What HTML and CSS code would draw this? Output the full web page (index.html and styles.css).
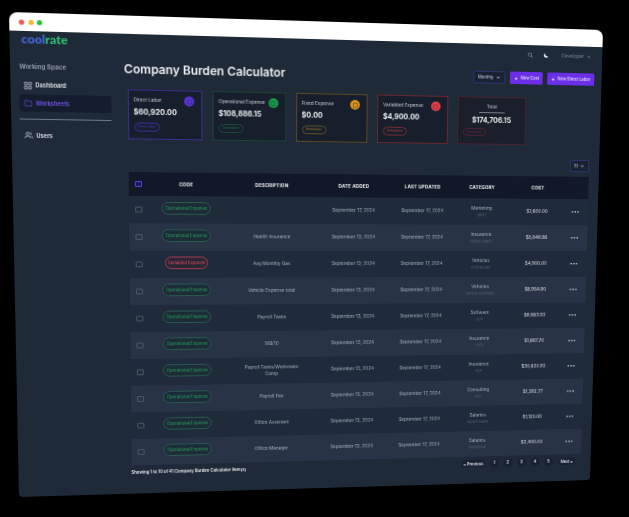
FILE: index.html
```html
<!DOCTYPE html>
<html lang="en">
<head>
  <meta charset="UTF-8">
  <meta name="viewport" content="width=device-width, initial-scale=1.0">
  <title>Company Burden Calculator</title>
  <link rel="stylesheet" href="styles.css">
</head>
<body>
  <div class="window">
   <div class="window-inner">
    <div class="titlebar">
      <span class="dot dot-red"></span><span class="dot dot-yellow"></span><span class="dot dot-green"></span>
    </div>
    <div class="shell">
      <aside class="sidebar">
        <div class="logo"><span class="logo-cool">cool</span><span class="logo-rate">rate</span></div>
        <p class="side-title">Working Space</p>
        <a class="side-link">
          <svg viewBox="0 0 16 16"><rect x="2" y="2" width="5" height="5" rx="1.5"/><rect x="9" y="2" width="5" height="5" rx="1.5"/><rect x="2" y="9" width="5" height="5" rx="1.5"/><rect x="9" y="9" width="5" height="5" rx="1.5"/></svg>
          Dashboard
        </a>
        <a class="side-link side-active">
          <svg viewBox="0 0 16 16"><path d="M2 4.5a1 1 0 0 1 1-1h3.2l1.5 1.6H13a1 1 0 0 1 1 1v5.9a1 1 0 0 1-1 1H3a1 1 0 0 1-1-1z"/></svg>
          Worksheets
        </a>
        <hr class="side-rule">
        <a class="side-link">
          <svg viewBox="0 0 16 16"><circle cx="6" cy="5" r="2.6"/><path d="M1.5 13.5c0-2.6 2-4.3 4.5-4.3s4.5 1.7 4.5 4.3"/><path d="M10.5 2.6a2.6 2.6 0 0 1 0 4.8M12 9.6c1.6.6 2.6 2 2.6 3.9"/></svg>
          Users
        </a>
      </aside>
      <main class="main">
        <div class="topnav">
          <svg class="nav-icon" viewBox="0 0 16 16"><circle cx="7" cy="7" r="4.5"/><path d="M10.5 10.5 14 14"/></svg>
          <svg class="nav-icon nav-moon" viewBox="0 0 16 16"><path d="M13.5 10.2A6 6 0 0 1 5.8 2.5a6 6 0 1 0 7.7 7.7z"/></svg>
          <span class="nav-user">Developer</span>
          <svg class="chev" viewBox="0 0 10 10"><path d="M2 3.5 5 6.5 8 3.5"/></svg>
        </div>
        <div class="head">
          <h1>Company Burden Calculator</h1>
          <div class="head-actions">
            <button class="btn btn-select">Monthly <svg class="chev" viewBox="0 0 10 10"><path d="M2 3.5 5 6.5 8 3.5"/></svg></button>
            <button class="btn btn-primary"><b>+</b> New Cost</button>
            <button class="btn btn-primary"><b>+</b> New Direct Labor</button>
          </div>
        </div>
        <div class="cards">
          <div class="card card-purple">
            <p class="card-label">Direct Labor</p>
            <p class="card-value">$60,920.00</p>
            <span class="pill">Direct Labor</span>
            <span class="card-icon"></span>
          </div>
          <div class="card card-green">
            <p class="card-label">Operational Expense</p>
            <p class="card-value">$108,886.15</p>
            <span class="pill">Breakdown</span>
            <span class="card-icon"></span>
          </div>
          <div class="card card-amber">
            <p class="card-label">Fixed Expense</p>
            <p class="card-value">$0.00</p>
            <span class="pill">Breakdown</span>
            <span class="card-icon"></span>
          </div>
          <div class="card card-red">
            <p class="card-label">Variabled Expense</p>
            <p class="card-value">$4,900.00</p>
            <span class="pill">Breakdown</span>
            <span class="card-icon"></span>
          </div>
          <div class="card card-total">
            <p class="card-label">Total</p>
            <p class="card-value">$174,706.15</p>
            <span class="pill">Breakdown</span>
          </div>
        </div>
        <div class="size-row">
          <button class="btn btn-size">10 <svg class="chev" viewBox="0 0 10 10"><path d="M2 3.5 5 6.5 8 3.5"/></svg></button>
        </div>
        <table class="grid">
          <colgroup>
            <col class="c-check"><col class="c-code"><col class="c-desc"><col class="c-date"><col class="c-date2"><col class="c-cat"><col class="c-cost"><col class="c-more">
          </colgroup>
          <thead>
            <tr>
              <th><span class="check check-on"></span></th>
              <th>Code</th><th>Description</th><th>Date Added</th><th>Last Updated</th><th>Category</th><th>Cost</th><th></th>
            </tr>
          </thead>
          <tbody>
            <tr>
              <td><span class="check"></span></td><td><span class="badge">Operational Expense</span></td><td></td>
              <td>September 17, 2024</td><td>September 17, 2024</td>
              <td>Marketing<small>Sport</small></td><td class="cost">$1,600.00</td><td class="more">•••</td>
            </tr>
            <tr>
              <td><span class="check"></span></td><td><span class="badge">Operational Expense</span></td><td>Health Insurance</td>
              <td>September 13, 2024</td><td>September 17, 2024</td>
              <td>Insurance<small>United Health</small></td><td class="cost">$5,848.86</td><td class="more">•••</td>
            </tr>
            <tr>
              <td><span class="check"></span></td><td><span class="badge badge-red">Variabled Expense</span></td><td>Avg Monthly Gas</td>
              <td>September 13, 2024</td><td>September 17, 2024</td>
              <td>Vehicles<small>Vehicle Gas</small></td><td class="cost">$4,900.00</td><td class="more">•••</td>
            </tr>
            <tr>
              <td><span class="check"></span></td><td><span class="badge">Operational Expense</span></td><td>Vehicle Expense total</td>
              <td>September 13, 2024</td><td>September 17, 2024</td>
              <td>Vehicles<small>Vehicle Expenses</small></td><td class="cost">$6,954.80</td><td class="more">•••</td>
            </tr>
            <tr>
              <td><span class="check"></span></td><td><span class="badge">Operational Expense</span></td><td>Payroll Taxes</td>
              <td>September 13, 2024</td><td>September 17, 2024</td>
              <td>Software<small>ADP</small></td><td class="cost">$8,863.93</td><td class="more">•••</td>
            </tr>
            <tr>
              <td><span class="check"></span></td><td><span class="badge">Operational Expense</span></td><td>168/10</td>
              <td>September 13, 2024</td><td>September 17, 2024</td>
              <td>Insurance<small>Tivity</small></td><td class="cost">$1,687.70</td><td class="more">•••</td>
            </tr>
            <tr>
              <td><span class="check"></span></td><td><span class="badge">Operational Expense</span></td><td class="desc-wrap">Payroll Taxes/Workmans Comp</td>
              <td>September 13, 2024</td><td>September 17, 2024</td>
              <td>Insurance<small>ADP</small></td><td class="cost">$30,620.92</td><td class="more">•••</td>
            </tr>
            <tr>
              <td><span class="check"></span></td><td><span class="badge">Operational Expense</span></td><td>Payroll Fee</td>
              <td>September 13, 2024</td><td>September 17, 2024</td>
              <td>Consulting<small>ADP</small></td><td class="cost">$1,392.77</td><td class="more">•••</td>
            </tr>
            <tr>
              <td><span class="check"></span></td><td><span class="badge">Operational Expense</span></td><td>Office Assistant</td>
              <td>September 13, 2024</td><td>September 17, 2024</td>
              <td>Salaries<small>Vacant Name</small></td><td class="cost">$1,120.00</td><td class="more">•••</td>
            </tr>
            <tr>
              <td><span class="check"></span></td><td><span class="badge">Operational Expense</span></td><td>Office Manager</td>
              <td>September 13, 2024</td><td>September 17, 2024</td>
              <td>Salaries<small>Dominique</small></td><td class="cost">$2,400.00</td><td class="more">•••</td>
            </tr>
          </tbody>
        </table>
        <div class="foot">
          <p class="foot-note">Showing 1 to 10 of 41 Company Burden Calculator Item(s)</p>
          <div class="pager">
            <span class="page-text">« Previous</span>
            <span class="page-num">1</span><span class="page-num">2</span><span class="page-num">3</span><span class="page-num">4</span><span class="page-num">5</span>
            <span class="page-text page-next">Next »</span>
          </div>
        </div>
      </main>
    </div>
   </div>
  </div>
</body>
</html>
```

FILE: styles.css
```css
* {
  margin: 0;
  padding: 0;
  box-sizing: border-box;
}
html, body {
  width: 629px;
  height: 517px;
  overflow: hidden;
  background-color: #000;
}
body {
  font-family: "Inter", "Liberation Sans", sans-serif;
  color: #aab2bf;
}

/* the browser window, tilted onto the picture */
.window {
  width: 600px;
  height: 490px;
  background-color: #1f2a38;
  border-radius: 8px 8px 4px 4px;
  overflow: hidden;
  transform-origin: 0 0;
  transform: matrix3d(1.069766,0.033966,0,0.00013228, 0.022040,1.032490,0,0.0000859, 0,0,1,0, 9,12,0,1);
  filter: blur(0.3px);
}
.window-inner {
  zoom: 0.5;
  width: 1200px;
  height: 980px;
}
.titlebar {
  height: 36px;
  background-color: #fff;
  display: flex;
  align-items: center;
  gap: 7px;
  padding-left: 18px;
}
.dot {
  width: 10px;
  height: 10px;
  border-radius: 50%;
}
.dot-red { background-color: #f0544c; }
.dot-yellow { background-color: #f5b62e; }
.dot-green { background-color: #27c13f; }

.shell {
  display: flex;
  height: 944px;
}
.sidebar {
  width: 197px;
  flex: none;
  padding: 0 6px 0 16px;
  display: flex;
  flex-direction: column;
}
.logo {
  font-family: "Lato", "Liberation Sans", sans-serif;
  font-size: 24px;
  font-weight: 900;
  line-height: 32px;
  padding-left: 6px;
}
.logo-cool { color: #4468de; }
.logo-rate { color: #2cc070; }
.side-title {
  margin-top: 27px;
  font-size: 12px;
  font-weight: 700;
  line-height: 18px;
  color: #8d97a6;
  padding-left: 1px;
}
.side-link {
  display: flex;
  align-items: center;
  gap: 5px;
  height: 34px;
  padding-left: 8px;
  font-size: 11px;
  font-weight: 700;
  color: #d5dae2;
}
.side-link svg {
  width: 18px;
  height: 18px;
  fill: none;
  stroke: #b4bcc8;
  stroke-width: 1.3;
}
.sidebar .side-title + .side-link {
  margin-top: 12px;
}
.side-active {
  background-color: #141d2d;
  border-radius: 6px;
  color: #6d4fe0;
  margin-top: 1px;
}
.side-active svg {
  stroke: #5c4bc4;
}
.side-rule {
  border: 0;
  height: 2px;
  background-color: #6f7886;
  margin-top: 13px;
  margin-bottom: 15px;
}

.main {
  flex: 1;
  padding: 0 23px 0 26px;
  min-width: 0;
}
.topnav {
  height: 40px;
  display: flex;
  align-items: center;
  justify-content: flex-end;
  gap: 5px;
  padding-right: 2px;
  font-size: 10px;
  color: #77818f;
}
.nav-icon {
  width: 13px;
  height: 13px;
  fill: none;
  stroke: #98a1ae;
  stroke-width: 1.4;
  margin-right: 15px;
}
.nav-moon {
  fill: #dfe3ea;
  stroke: none;
  margin-right: 22px;
}
.chev {
  width: 10px;
  height: 10px;
  fill: none;
  stroke: currentColor;
  stroke-width: 1.4;
}
.head {
  height: 58px;
  display: flex;
  align-items: center;
  justify-content: space-between;
  margin-right: -6px;
}
.head h1 {
  font-size: 23.5px;
  font-weight: 600;
  color: #eef0f4;
  margin-left: -6px;
  margin-top: 2px;
}
.head-actions {
  display: flex;
  gap: 10px;
}
.btn {
  height: 26px;
  border: 0;
  border-radius: 3px;
  font-family: inherit;
  font-size: 8.5px;
  font-weight: 500;
  display: flex;
  align-items: center;
  justify-content: center;
  gap: 6px;
  padding: 0 8px;
  white-space: nowrap;
}
.btn-primary {
  background-color: #6a2fe6;
  color: #e8e4f8;
}
.btn-primary b {
  font-size: 12px;
}
.btn-select, .btn-size {
  background-color: #182233;
  border: 1px solid #2c3670;
  color: #b6bdc9;
}
.cards {
  margin-top: 11px;
  display: flex;
  gap: 20px;
}
.card {
  position: relative;
  width: 147px;
  height: 100px;
  padding: 13px 10px;
  background-color: #171f2c;
  border: 1px solid #333;
}
.card-label {
  font-size: 9.5px;
  line-height: 14px;
  color: #c8ccd4;
}
.card-value {
  margin-top: 7px;
  font-size: 14.5px;
  font-weight: 700;
  line-height: 20px;
  color: #eceef2;
}
.pill {
  display: inline-block;
  margin-top: 11px;
  width: 50px;
  height: 17px;
  border: 1px solid;
  border-radius: 9px;
  font-size: 6px;
  line-height: 15px;
  text-align: center;
  white-space: nowrap;
  overflow: hidden;
}
.card-icon {
  position: absolute;
  top: 11px;
  right: 14px;
  width: 20px;
  height: 20px;
  border-radius: 50%;
}
.card-icon::after {
  content: "";
  position: absolute;
  inset: 5px;
  border: 1px solid rgba(0, 0, 0, 0.28);
  border-radius: 1px;
}
.card-purple { border-color: #3a2f8c; }
.card-purple .pill { border-color: #3c30a0; color: #4a3ed0; }
.card-purple .card-icon { background-color: #5a35d8; }
.card-green { border-color: #1c4438; }
.card-green .pill { border-color: #1d4a3c; color: #1f7a4c; }
.card-green .card-icon { background-color: #1c9a4c; }
.card-amber { border-color: #5a4a22; }
.card-amber .pill { border-color: #5e5228; color: #a07a20; }
.card-amber .card-icon { background-color: #d8921a; }
.card-red { border-color: #6e2630; }
.card-red .pill { border-color: #7c2a34; color: #c8404a; }
.card-red .card-icon { background-color: #e5404a; }
.card-total {
  background-color: #1a1f2b;
  border-color: #4a2230;
}
.card-total .card-label {
  text-align: center;
  padding-bottom: 4px;
  margin: 0 34px;
  border-bottom: 1px solid #7a818c;
}
.card-total .card-value {
  margin-top: 5px;
  text-align: center;
}
.card-total .pill {
  margin-top: 6px;
  border-color: #4e2530;
  color: #6e2a34;
}

.size-row {
  margin-top: 30px;
  display: flex;
  justify-content: flex-end;
}
.btn-size {
  width: 42px;
  padding: 0;
  font-size: 9px;
  gap: 3px;
  border-radius: 2px;
}
.grid {
  margin-top: 11px;
  width: 954px;
  table-layout: fixed;
  border-collapse: collapse;
  font-size: 9.5px;
}
.c-check { width: 39px; }
.c-code { width: 150px; }
.c-desc { width: 194px; }
.c-date { width: 142px; }
.c-date2 { width: 146px; }
.c-cat { width: 106px; }
.c-cost { width: 134px; }
.c-more { width: 43px; }
.grid th {
  height: 48px;
  background-color: #111827;
  color: #f0f2f5;
  font-size: 9.5px;
  font-weight: 700;
  letter-spacing: 0.3px;
  text-transform: uppercase;
}
.grid td {
  height: 56px;
  text-align: center;
  line-height: 15px;
  color: #a7afbb;
  background-color: #1f2b3a;
}
.grid td.desc-wrap {
  padding: 0 30px;
}
.grid tbody tr:nth-child(even) td {
  background-color: #283446;
}
.grid small {
  display: block;
  font-size: 7.5px;
  line-height: 12px;
  color: #566172;
}
.grid .cost {
  font-weight: 500;
  color: #c3c9d2;
}
.grid .more {
  font-size: 10px;
  letter-spacing: 0.5px;
  color: #eef0f3;
  padding-right: 10px;
}
.check {
  display: inline-block;
  width: 13px;
  height: 13px;
  border: 1px solid #4e5866;
  border-radius: 2px;
  vertical-align: middle;
}
.check-on {
  border: 3px solid #5a3ff0;
  background-color: #1a1f44;
}
.badge {
  display: inline-block;
  width: 97px;
  height: 26px;
  line-height: 24px;
  border: 1px solid #2a5a50;
  border-radius: 13px;
  font-size: 8.5px;
  color: #25a05c;
  background-color: #1d2d38;
  white-space: nowrap;
  overflow: hidden;
}
.badge-red {
  width: 86px;
  border-color: #a83a50;
  color: #e04a58;
  background-color: #2a2636;
}
.foot {
  height: 28px;
  display: flex;
  align-items: center;
  justify-content: space-between;
  padding-right: 13px;
}
.foot-note {
  font-size: 8.5px;
  font-weight: 600;
  color: #e8eaee;
}
.pager {
  display: flex;
  align-items: center;
  gap: 8px;
  margin-top: 5px;
  font-size: 8.5px;
  font-weight: 600;
  color: #dfe2e7;
}
.page-text {
  background-color: #182130;
  padding: 3px 4px;
  border-radius: 3px;
}
.page-next {
  margin-left: 6px;
}
.page-num {
  width: 20px;
  height: 20px;
  margin-left: 2px;
  border-radius: 50%;
  background-color: #182130;
  text-align: center;
  line-height: 20px;
}
```
